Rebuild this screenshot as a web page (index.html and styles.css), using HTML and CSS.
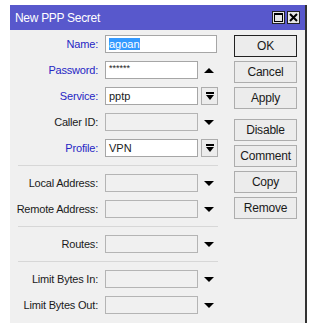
FILE: index.html
```html
<!DOCTYPE html>
<html lang="en">
<head>
    <meta charset="UTF-8">
    <title>New PPP Secret</title>
    <link rel="stylesheet" href="styles.css">
</head>
<body>
    <div class="window">
        <div class="titlebar">
            <span class="title">New PPP Secret</span>
            <div class="win-btns">
                <span class="win-btn">
                    <svg width="11" height="11" viewBox="0 0 11 11"><rect x="1.5" y="1.5" width="8" height="8" fill="none" stroke="#000" stroke-width="1"/><rect x="1" y="1" width="9" height="2" fill="#000"/></svg>
                </span>
                <span class="win-btn">
                    <svg width="11" height="11" viewBox="0 0 11 11"><path d="M2 2 L9 9 M9 2 L2 9" stroke="#000" stroke-width="2"/></svg>
                </span>
            </div>
        </div>
        <div class="content">
            <div class="form">
                <div class="row">
                    <label class="lbl blue">Name:</label>
                    <div class="field wide"><span class="sel">agoan</span></div>
                </div>
                <div class="row">
                    <label class="lbl blue">Password:</label>
                    <div class="field pass">******</div>
                    <span class="arrow"><span class="tri up"></span></span>
                </div>
                <div class="row">
                    <label class="lbl blue">Service:</label>
                    <div class="field">pptp</div>
                    <span class="combo"><svg width="8" height="8" viewBox="0 0 8 8"><rect x="0" y="0" width="8" height="2" fill="#000"/><path d="M0 3 L8 3 L4 8 Z" fill="#000"/></svg></span>
                </div>
                <div class="row">
                    <label class="lbl">Caller ID:</label>
                    <div class="field off"></div>
                    <span class="arrow"><span class="tri"></span></span>
                </div>
                <div class="row">
                    <label class="lbl blue">Profile:</label>
                    <div class="field">VPN</div>
                    <span class="combo"><svg width="8" height="8" viewBox="0 0 8 8"><rect x="0" y="0" width="8" height="2" fill="#000"/><path d="M0 3 L8 3 L4 8 Z" fill="#000"/></svg></span>
                </div>
                <div class="sep"></div>
                <div class="row">
                    <label class="lbl">Local Address:</label>
                    <div class="field off"></div>
                    <span class="arrow"><span class="tri"></span></span>
                </div>
                <div class="row">
                    <label class="lbl">Remote Address:</label>
                    <div class="field off"></div>
                    <span class="arrow"><span class="tri"></span></span>
                </div>
                <div class="sep"></div>
                <div class="row">
                    <label class="lbl">Routes:</label>
                    <div class="field off"></div>
                    <span class="arrow"><span class="tri"></span></span>
                </div>
                <div class="sep"></div>
                <div class="row">
                    <label class="lbl">Limit Bytes In:</label>
                    <div class="field off"></div>
                    <span class="arrow"><span class="tri"></span></span>
                </div>
                <div class="row">
                    <label class="lbl">Limit Bytes Out:</label>
                    <div class="field off"></div>
                    <span class="arrow"><span class="tri"></span></span>
                </div>
            </div>
            <div class="buttons">
                <button class="btn default">OK</button>
                <button class="btn">Cancel</button>
                <button class="btn">Apply</button>
                <button class="btn spaced">Disable</button>
                <button class="btn">Comment</button>
                <button class="btn">Copy</button>
                <button class="btn">Remove</button>
            </div>
        </div>
    </div>
</body>
</html>
```

FILE: styles.css
```css
body {
    margin: 0;
    padding: 5px 0 0 10px;
    background: #fff;
    font-family: "Liberation Sans", Arial, sans-serif;
    font-size: 11px;
    color: #1a1a1a;
}

.window {
    width: 295px;
    border-right: 2px solid #333;
    background: #f0f0f0;
}

.titlebar {
    height: 25px;
    background: #5858cc;
    display: flex; align-items: center; justify-content: space-between;
    padding: 0 5px 0 5px;
}
.title { color: #fff; font-size: 12px; letter-spacing: -0.3px; }
.win-btns { display: flex; gap: 2px; }
.win-btn {
    width: 13px; height: 13px; box-sizing: border-box;
    background: #e6e6e6; border: 1px solid #222;
    display: flex; align-items: center; justify-content: center;
}

.content {
    display: flex;
    padding: 5px 0 9px 0;
}

.form {
    display: flex; flex-direction: column; gap: 8px;
    width: 224px;
}
.row { display: flex; align-items: center; height: 18px; }
.lbl {
    width: 88px; margin-right: 7px;
    text-align: right; white-space: nowrap;
    letter-spacing: -0.2px;
}
.lbl.blue { color: #2626c4; }

.field {
    width: 93px; height: 18px; box-sizing: border-box;
    background: #fff; border: 1px solid #a6a6a6;
    padding: 0 3px; line-height: 16px;
    white-space: nowrap; overflow: hidden;
}
.field.wide { width: 112px; }
.field.off { background: #f0f0f0; border-color: #b4b4b4; }
.field.pass { font-size: 9px; line-height: 12px; }
.sel { background: #3399ff; color: #fff; }

.arrow {
    width: 16px; height: 18px; margin-left: 3px;
    display: flex; align-items: center; justify-content: center;
}
.tri {
    width: 0; height: 0;
    border-left: 5px solid transparent; border-right: 5px solid transparent;
    border-top: 5px solid #000;
}
.tri.up { border-top: none; border-bottom: 5px solid #000; }

.combo {
    width: 17px; height: 18px; margin-left: 3px; box-sizing: border-box;
    border: 1px solid #adadad; background: #ececec;
    display: flex; align-items: center; justify-content: center;
}

.sep {
    height: 1px; background: #d7d7d7;
    margin-left: 8px; width: 200px;
}

.buttons {
    display: flex; flex-direction: column; gap: 4px;
}
.btn {
    width: 63px; height: 22px; box-sizing: border-box;
    background: #ececec; border: 1px solid #adadad;
    font-family: "Liberation Sans", Arial, sans-serif; font-size: 12px;
    letter-spacing: -0.2px;
    color: #1a1a1a; padding: 0;
}
.btn.default { border-color: #222; }
.btn.spaced { margin-top: 6px; }
```
